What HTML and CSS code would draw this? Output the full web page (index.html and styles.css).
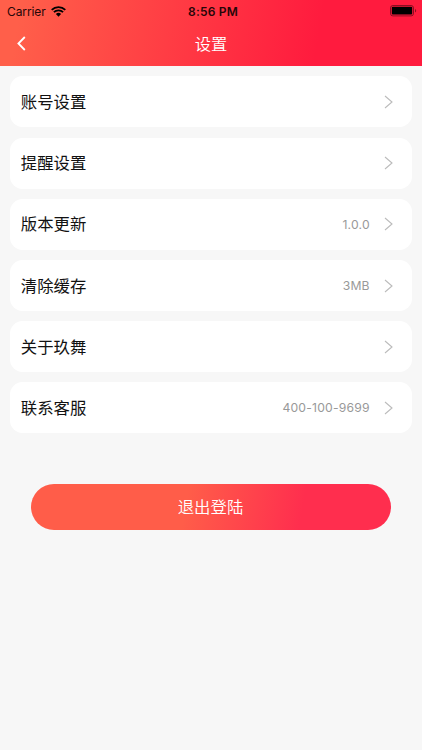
FILE: index.html
```
<!DOCTYPE html>
<html lang="zh-CN">
<head>
	<meta charset="UTF-8">
	<title>设置</title>
	<link rel="stylesheet" href="styles.css">
</head>
<body>
	<header class="header">
		<div class="statusBar">
			<div class="carrier">
				<span>Carrier</span>
				<svg class="wifi" viewBox="0 0 15 11">
					<path d="M.7 3.9a9.6 9.6 0 0 1 13.6 0M2.9 6.2a6.5 6.5 0 0 1 9.2 0" fill="none" stroke="currentColor" stroke-width="1.8"/>
					<path d="M7.5 10.7 4.9 8.1a3.7 3.7 0 0 1 5.2 0z" fill="currentColor"/>
				</svg>
			</div>
			<span class="time">8:56 PM</span>
			<div class="power">
				<svg class="battery" viewBox="0 0 27 12">
					<rect x=".5" y=".5" width="23" height="10.4" rx="2.4" fill="none" stroke="#000" stroke-opacity=".45"/>
					<rect x="1.8" y="1.8" width="20.4" height="7.8" rx="1" fill="#000"/>
					<path d="M25 4v3.6c1.6-.6 1.6-3 0-3.6z" fill="#000" fill-opacity=".45"/>
				</svg>
			</div>
		</div>
		<div class="navBar">
			<svg class="back" viewBox="0 0 9 15"><path d="M7.8 1 1.4 7.5 7.8 14"/></svg>
			<h1>设置</h1>
		</div>
	</header>

	<main>
		<ul class="settings">
			<li>
				<span class="label">账号设置</span>
				<svg class="arrow" viewBox="0 0 9 14"><path d="M1 1l7 6-7 6"/></svg>
			</li>
			<li>
				<span class="label">提醒设置</span>
				<svg class="arrow" viewBox="0 0 9 14"><path d="M1 1l7 6-7 6"/></svg>
			</li>
			<li>
				<span class="label">版本更新</span>
				<span class="value">1.0.0</span>
				<svg class="arrow" viewBox="0 0 9 14"><path d="M1 1l7 6-7 6"/></svg>
			</li>
			<li>
				<span class="label">清除缓存</span>
				<span class="value">3MB</span>
				<svg class="arrow" viewBox="0 0 9 14"><path d="M1 1l7 6-7 6"/></svg>
			</li>
			<li>
				<span class="label">关于玖舞</span>
				<svg class="arrow" viewBox="0 0 9 14"><path d="M1 1l7 6-7 6"/></svg>
			</li>
			<li>
				<span class="label">联系客服</span>
				<span class="value">400-100-9699</span>
				<svg class="arrow" viewBox="0 0 9 14"><path d="M1 1l7 6-7 6"/></svg>
			</li>
		</ul>
		<button class="logout">退出登陆</button>
	</main>
</body>
</html>
```
FILE: styles.css
```
* {
	box-sizing: border-box;
}

body {
	margin: 0;
	min-height: 100vh;
	background: #f7f7f7;
	color: #111;
	font-family: Inter, "Noto Sans CJK SC", sans-serif;
}

/* header */
.header {
	height: 66.3px;
	background: linear-gradient(100deg, #ff5f4a 5%, #ff1b3e 75%);
}

.statusBar {
	display: grid;
	grid-template-columns: 1fr auto 1fr;
	align-items: center;
	height: 21px;
	padding: 1px 5px 0 7px;
	font-size: 12px;
	color: #260608;
}

.carrier {
	display: flex;
	align-items: center;
	gap: 5px;
	letter-spacing: -0.1px;
}

.wifi {
	width: 15px;
	height: 11px;
	color: #000;
}

.time {
	padding-left: 2px;
	font-weight: 600;
	letter-spacing: 0.2px;
}

.power {
	display: flex;
	justify-content: flex-end;
}

.battery {
	width: 27px;
	height: 12px;
}

.navBar {
	display: grid;
	grid-template-columns: 1fr auto 1fr;
	align-items: center;
	height: 45px;
	padding: 0 17px;
}

.navBar h1 {
	margin: 0;
	padding-bottom: 2px;
	color: #fff;
	font-size: 16.3px;
	font-weight: 350;
}

.back {
	width: 9px;
	height: 15px;
	fill: none;
	stroke: #fff;
	stroke-width: 1.8;
}

/* settings list */
.settings {
	display: flex;
	flex-direction: column;
	gap: 10.2px;
	margin: 0;
	padding: 10.2px 10.2px 0;
	list-style: none;
}

.settings li {
	display: flex;
	align-items: center;
	height: 51px;
	padding: 0 18.5px 0 10.6px;
	border-radius: 12.5px;
	background: #fff;
}

.label {
	flex: 1;
	padding-bottom: 2px;
	font-size: 16.4px;
}

.value {
	margin-right: 14.5px;
	color: #999;
	font-size: 12.2px;
	letter-spacing: 0.2px;
}

.arrow {
	width: 9px;
	height: 14px;
	fill: none;
	stroke: #bbb;
	stroke-width: 1.1;
}

.logout {
	display: block;
	width: 360px;
	height: 46px;
	margin: 51px auto 0;
	padding: 0 1px 2px 0;
	border: none;
	border-radius: 23px;
	background: linear-gradient(100deg, #ff5d49 43%, #ff2e4e 75%);
	color: #fff;
	font-family: inherit;
	font-size: 16.4px;
	font-weight: 350;
}
```
